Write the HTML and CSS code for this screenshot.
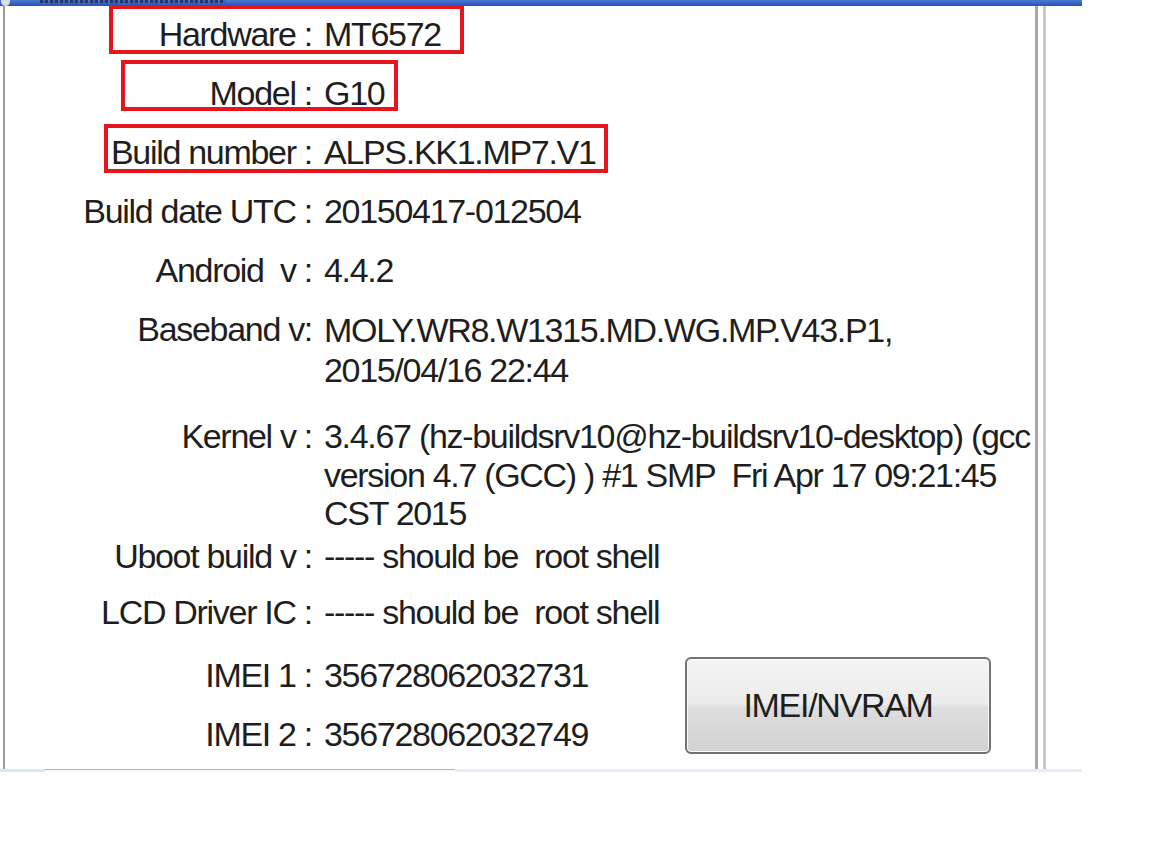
FILE: index.html
```html
<!DOCTYPE html>
<html>
<head>
<meta charset="utf-8">
<link rel="stylesheet" href="styles.css">
</head>
<body>
<div class="window">
  <div class="titlebar"><span class="title-icon"></span><span class="title-ink"></span></div>
  <div class="frame">
    <div class="client">
      <div class="info">
        <div class="row"><div class="label">Hardware :</div><div class="value">MT6572</div></div>
        <div class="row"><div class="label">Model :</div><div class="value">G10</div></div>
        <div class="row"><div class="label">Build number :</div><div class="value">ALPS.KK1.MP7.V1</div></div>
        <div class="row"><div class="label">Build date UTC :</div><div class="value">20150417-012504</div></div>
        <div class="row"><div class="label">Android&nbsp; v :</div><div class="value">4.4.2</div></div>
        <div class="row"><div class="label">Baseband v:</div><div class="value multi base">MOLY.WR8.W1315.MD.WG.MP.V43.P1,<br>2015/04/16 22:44</div></div>
        <div class="row kernel"><div class="label">Kernel v :</div><div class="value multi kern">3.4.67 (hz-buildsrv10@hz-buildsrv10-desktop) (gcc<br>version 4.7 (GCC) ) #1 SMP&nbsp; Fri Apr 17 09:21:45<br>CST 2015</div></div>
        <div class="row uboot"><div class="label">Uboot build v :</div><div class="value">----- should be&nbsp; root shell</div></div>
        <div class="row lcd"><div class="label">LCD Driver IC :</div><div class="value">----- should be&nbsp; root shell</div></div>
        <div class="imei-group">
          <div class="imei-rows">
            <div class="row"><div class="label">IMEI 1 :</div><div class="value">356728062032731</div></div>
            <div class="row"><div class="label">IMEI 2 :</div><div class="value">356728062032749</div></div>
          </div>
          <button class="btn">IMEI/NVRAM</button>
        </div>
      </div>
    </div>
    <div class="gap"></div>
    <div class="edge"></div>
    <div class="outside"></div>
  </div>
  <div class="statusbar"><div class="sb-a"></div><div class="sb-b"></div><div class="sb-c"></div></div>
</div>
<div class="mark mark-hw"></div>
<div class="mark mark-model"></div>
<div class="mark mark-build"></div>
</body>
</html>
```
FILE: styles.css
```css
html, body {
  margin: 0;
  padding: 0;
  background: #ffffff;
}
body {
  width: 1152px;
  height: 864px;
  position: relative;
  font-family: "Liberation Sans", Arial, sans-serif;
  color: #1e1e1e;
}
.window {
  width: 1082px;
  display: flex;
  flex-direction: column;
}
.titlebar {
  height: 6px;
  overflow: hidden;
  background: linear-gradient(#4a78d2, #2552b4);
  display: flex;
  align-items: flex-start;
}
.title-icon {
  width: 9px;
  height: 6px;
  margin-left: 1px;
  background: #d8dde8;
  border-radius: 0 0 5px 5px;
}
.title-ink {
  margin-left: 30px;
  width: 185px;
  height: 3px;
  background: repeating-linear-gradient(90deg, #1b2a55 0 3px, #3a5fb0 3px 5px, #1b2a55 5px 8px, #4a70c0 8px 10px);
  opacity: 0.8;
}
.frame {
  display: flex;
  height: 763px;
}
.client {
  margin-left: 3px;
  width: 1030px;
  border-left: 2px solid #9c9c9c;
  border-right: 3px solid #a8a8a8;
  background: #ffffff;
}
.gap {
  width: 5px;
}
.edge {
  width: 3px;
  background: #c8c8c8;
}
.outside {
  flex: 1;
}
.info {
  padding-top: 9px;
  display: flex;
  flex-direction: column;
  gap: 20px;
  font-size: 34px;
  letter-spacing: -1.3px;
}
.row {
  display: flex;
  line-height: 39px;
  white-space: nowrap;
}
.label {
  width: 307px;
  flex: 0 0 307px;
  text-align: right;
}
.value {
  margin-left: 12px;
}
.multi.base {
  line-height: 40px;
}
.multi.kern {
  line-height: 38.5px;
}
.row.kernel {
  margin-top: 7px;
}
.row.uboot {
  margin-top: -16px;
}
.row.lcd {
  margin-top: -3px;
}
.imei-group {
  margin-top: 4px;
  display: flex;
  align-items: flex-start;
}
.imei-rows {
  width: 680px;
  flex: 0 0 680px;
  display: flex;
  flex-direction: column;
  gap: 20.5px;
}
.btn {
  margin-top: 1px;
  width: 306px;
  height: 97px;
  border: 2px solid #727272;
  border-radius: 6px;
  background: linear-gradient(#f4f4f4 0%, #ececec 48%, #dedede 52%, #d2d2d2 100%);
  box-shadow: inset 0 0 0 1px #fbfbfb;
  font-family: "Liberation Sans", Arial, sans-serif;
  font-size: 34px;
  letter-spacing: -1.3px;
  color: #1e1e1e;
  padding: 0;
}
.statusbar {
  display: flex;
  height: 3px;
}
.sb-a {
  width: 45px;
  background: #dde8f5;
}
.sb-b {
  width: 410px;
  border-top: 1px solid #a9b6c8;
  background: #f7fafd;
}
.sb-c {
  flex: 1;
  background: #e4edf8;
}
.mark {
  position: absolute;
  border: 4px solid #e8141c;
  box-sizing: border-box;
}
.mark-hw {
  left: 109px;
  top: 5px;
  width: 355px;
  height: 49px;
}
.mark-model {
  left: 121px;
  top: 60px;
  width: 277px;
  height: 51px;
}
.mark-build {
  left: 104px;
  top: 124px;
  width: 504px;
  height: 49px;
}
```
